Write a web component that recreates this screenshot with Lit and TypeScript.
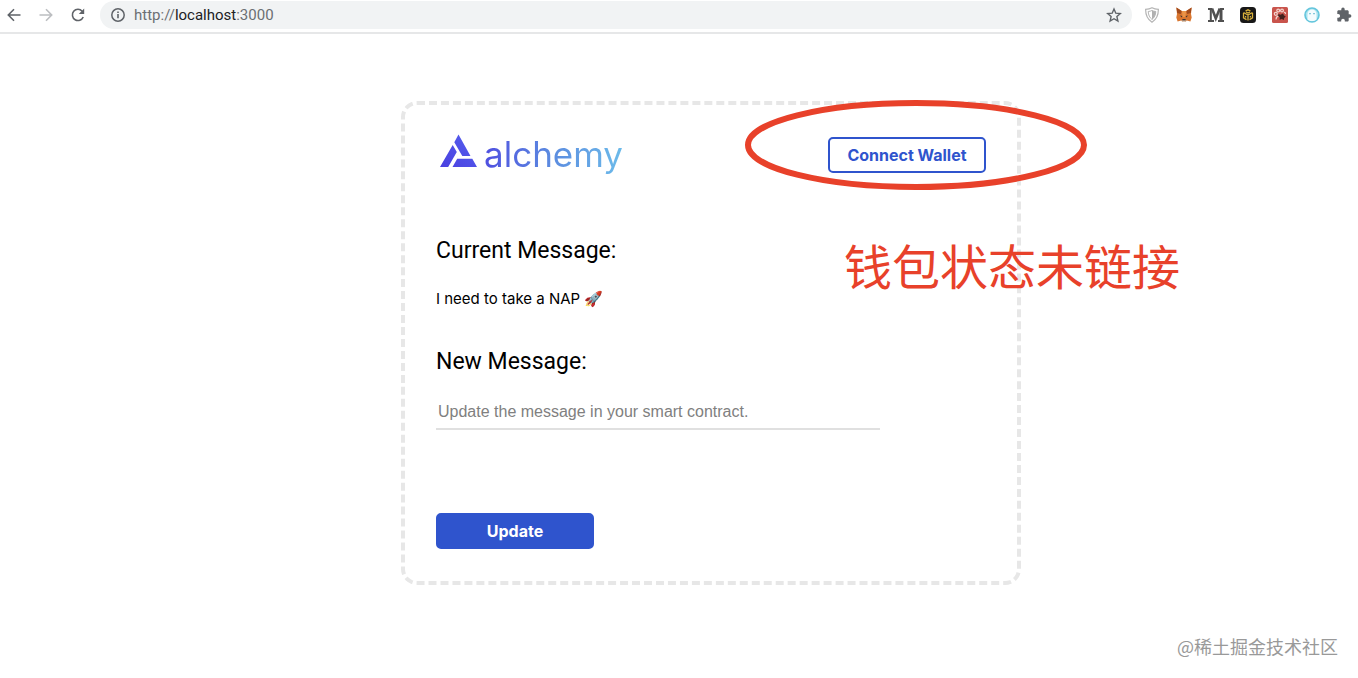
import { LitElement, html, css, svg } from "lit";
import { customElement, state } from "lit/decorators.js";

@customElement("browser-bar")
export class BrowserBar extends LitElement {
  static styles = css`
    :host {
      display: block;
      font-family: Roboto, "Liberation Sans", sans-serif;
    }
    nav {
      display: flex;
      align-items: center;
      height: 34px;
      padding: 0 6px 2px;
      box-sizing: border-box;
      border-bottom: 2px solid #e6e7e8;
    }
    button {
      display: flex;
      padding: 0;
      border: 0;
      background: none;
      color: #5f6368;
    }
    .history {
      display: flex;
      gap: 16px;
      margin-right: 14px;
    }
    .dim {
      color: #bcbec1;
    }
    .address {
      flex: 1;
      display: flex;
      align-items: center;
      gap: 8px;
      height: 28px;
      padding: 0 10px;
      border-radius: 14px;
      background: #f1f3f4;
      color: #5f6368;
    }
    .url {
      flex: 1;
      font-size: 15px;
      line-height: 20px;
      color: #6b6f73;
      text-decoration: none;
    }
    .url b {
      font-weight: 400;
      color: #202124;
    }
    .extensions {
      display: flex;
      gap: 16px;
      margin-left: 12px;
    }
    svg {
      display: block;
    }
  `;

  private icon(body: unknown, size = 16) {
    return html`<svg width=${size} height=${size} viewBox="0 0 16 16" fill="none" stroke="currentColor" stroke-width="1.6">${body}</svg>`;
  }

  render() {
    return html`
      <nav>
        <div class="history">
          <button aria-label="Back">${this.icon(svg`<path d="M14.500 8H2.500M8 2.300L2.300 8L8 13.700"/>`)}</button>
          <button class="dim" aria-label="Forward">${this.icon(svg`<path d="M1.500 8h12M8 2.300L13.700 8L8 13.700"/>`)}</button>
          <button aria-label="Reload">${this.icon(svg`<path d="M13.200 10A5.600 5.600 0 1 1 12.200 4.200"/><path d="M14.200 1.500V7H8.800z" fill="currentColor" stroke="none"/>`)}</button>
        </div>
        <div class="address">
          ${this.icon(svg`<circle cx="8" cy="8" r="6.200" stroke-width="1.500"/><path d="M8 7v4.300M8 4.500v1.500"/>`)}
          <a class="url" href="http://localhost:3000">http://<b>localhost</b>:3000</a>
          <button aria-label="Bookmark">${this.icon(svg`<path stroke-width="1.400" d="M8 2l1.800 4.200 4.500.4-3.400 3 1 4.400L8 11.700 4.100 14l1-4.400-3.400-3 4.500-.4z"/>`)}</button>
        </div>
        <div class="extensions">
          <button aria-label="Shield">${this.icon(svg`<path stroke="#b5b5b5" stroke-width="1.200" d="M8 .8c2 1.100 4 1.500 6.400 1.500C14.400 8 12.500 12.500 8 15.200 3.500 12.500 1.600 8 1.600 2.300 4 2.300 6 1.900 8 .8z"/><path stroke="#b5b5b5" stroke-width="1" d="M8 3.500c1.200.6 2.400.9 3.800 1C11.600 8 10.400 10.600 8 12.500 5.600 10.600 4.400 8 4.200 4.500 5.600 4.400 6.800 4.100 8 3.500z"/><path fill="#b0b0b0" stroke="none" d="M8 3.500v9c2.400-1.900 3.600-4.500 3.800-8C10.400 4.400 9.200 4.100 8 3.500z"/>`)}</button>
          <button aria-label="Fox wallet">${this.icon(svg`<g stroke="none"><path fill="#d9762f" d="M.4.600L5.800 4h4.400L15.600.6 15 7l.7 3.500-1.300 4-3.600-1L9.300 15H6.700l-1.500-1.500-3.600 1-1.300-4L1 7z"/><path fill="#a04a1c" d="M.4.600L5.800 4l-1 3L1.200 6zM15.600.6L10.200 4l1 3 3.600-1z"/><path fill="#ea9448" d="M5.800 4h4.400l-1 6H6.800z"/><path fill="#3a3433" d="M3.800 8.500l2.400.6-.3 1.300zM12.200 8.500l-2.400.6.3 1.300zM6.500 12h3l.3 1.700H6.200z"/><path fill="#d9c6b5" d="M5.200 13.500L6.700 15h2.600l1.500-1.500z"/></g>`)}</button>
          <button aria-label="Reader M">${this.icon(svg`<path fill="none" stroke="#505050" stroke-width="1.800" d="M0 2h4M12 2h4M0 14h6M10 14h6"/><path stroke="#505050" stroke-width="3" d="M13 2v12"/><path stroke="#505050" stroke-width="2" d="M2.800 2v12"/><path stroke="#505050" stroke-width="2.600" d="M4 1.500L7.800 11.500L11.800 1.500"/>`)}</button>
          <button aria-label="Binance wallet">${this.icon(svg`<rect width="16" height="16" rx="3.500" fill="#181818" stroke="none"/><path stroke="#d9b13b" stroke-width="1.300" d="M5.500 4L8 2.800 10.500 4M3.500 6v4.800L6.500 12.600M12.500 6v4.800L9.500 12.600M3.500 5.500L8 8l4.500-2.500M8 8v5.500M6 5l2 1 2-1M5.600 9v1.500M10.400 9v1.500"/>`)}</button>
          <button aria-label="Paw helper">${this.icon(svg`<rect width="16" height="16" rx="1.500" fill="#c9544c" stroke="none"/><g stroke="#f2d5ce" stroke-width="1.200"><circle cx="3.800" cy="6.800" r="1.500"/><circle cx="6.200" cy="3.600" r="1.400"/><circle cx="10" cy="3.600" r="1.400"/><path d="M12 5.500c1-.5 1.800.5 1.300 1.500M4 12.500c0-2 1.500-3.500 3-3.700"/></g><path fill="#43201d" stroke="none" d="M6.500 7l2 .8 2.500-1.300 1 2 1.800 1-1.600 1.500-.4 2-2-1-2.300.8.300-2.300L6 9z"/>`)}</button>
          <button aria-label="Ghost">${this.icon(svg`<circle cx="8" cy="8" r="7" fill="#a9e2ee" stroke="#63c5dc" stroke-width="1.600"/><path fill="#f4fcfe" stroke="none" d="M3.500 12.500V7a4.500 4.500 0 0 1 9 0v5.500c-2.500 2-6.500 2-9 0z"/><path stroke="#3fa9c4" stroke-width="1.200" d="M6 6v1.300M10 6v1.300"/>`)}</button>
          <button aria-label="Extensions">${this.icon(svg`<path fill="#5f6368" stroke="none" d="M13.700 7.300h-1V4.600c0-.7-.6-1.300-1.300-1.300H8.700v-1a1.700 1.700 0 0 0-3.400 0v1H2.600c-.7 0-1.300.6-1.300 1.300v2.500h1a1.800 1.800 0 0 1 0 3.600h-1v2.600c0 .7.600 1.300 1.300 1.300h2.600v-1a1.800 1.800 0 0 1 3.600 0v1h2.600c.7 0 1.300-.6 1.300-1.300v-2.600h1a1.700 1.700 0 0 0 0-3.400z"/>`)}</button>
        </div>
      </nav>
    `;
  }
}

@customElement("app-root")
export class AppRoot extends LitElement {
  static styles = css`
    :host {
      display: block;
      position: relative;
      min-height: 100vh;
      background: #fff;
      color: #000;
      font-family: Inter, "Noto Sans CJK SC", sans-serif;
    }
    main {
      padding: 67px 0 92px 64px;
    }
    .card {
      position: relative;
      max-width: 620px;
      box-sizing: border-box;
      margin: 0 auto;
      padding: 28px 31px 32px;
      border: 4px dashed #e7e7e7;
      border-radius: 16px;
    }
    header {
      display: flex;
      justify-content: space-between;
      align-items: center;
      height: 44px;
    }
    .logo {
      display: flex;
      gap: 6px;
      align-items: flex-start;
      height: 42px;
      padding-left: 4px;
    }
    .word {
      font-size: 35px;
      line-height: 40px;
      font-weight: 400;
      background: linear-gradient(90deg, #4f4fe0, #5c8de0 50%, #6cbbea);
      background-clip: text;
      -webkit-background-clip: text;
      color: transparent;
    }
    h2 {
      margin: 0;
      font: 400 23px/28px Roboto, sans-serif;
    }
    .current {
      margin-top: 60px;
    }
    p {
      margin: 24px 0 39px;
      font-size: 15px;
      line-height: 20px;
    }
    input {
      display: block;
      width: 100%;
      max-width: 444px;
      box-sizing: border-box;
      margin: 21px 0 83px;
      padding: 5px 2px 6px;
      border: 0;
      border-bottom: 2px solid #e0e0e0;
      background: none;
      font: 16px/20px "Liberation Sans", sans-serif;
    }
    input::placeholder {
      color: #808080;
      opacity: 1;
    }
    .btn {
      width: 158px;
      height: 36px;
      padding: 0;
      border: 2px solid #2f54cd;
      border-radius: 5px;
      font: 700 16px/20px Inter, sans-serif;
      color: #2f54cd;
      background: #fff;
    }
    .primary {
      display: block;
      background: #2f54cd;
      color: #fff;
    }
    .ring {
      position: absolute;
      left: 340px;
      top: -5px;
      overflow: visible;
      pointer-events: none;
    }
    .note {
      position: absolute;
      left: 439px;
      top: 127px;
      font: 48px/64px "Noto Sans CJK SC", sans-serif;
      color: #e8412a;
      white-space: nowrap;
    }
    .watermark {
      position: absolute;
      right: 20px;
      bottom: 20px;
      font: 18px/24px "Noto Sans CJK SC", sans-serif;
      color: #999;
    }
  `;

  @state() private message = "I need to take a NAP 🚀";

  render() {
    return html`
      <browser-bar></browser-bar>
      <main>
        <section class="card">
          <header>
            <div class="logo">
              <svg width="38" height="34" viewBox="0 0 38 34">
                <defs>
                  <linearGradient id="mark" x1="0" y1="1" x2="1" y2="0">
                    <stop offset="0" stop-color="#4a40e0" />
                    <stop offset="1" stop-color="#5560ee" />
                  </linearGradient>
                </defs>
                <path fill="url(#mark)" d="M18.500 0.500L14.300 8.300L22.300 22H30.500z M12.700 10.900L0 33H8.200L16.800 18z M17.200 24.700L12.500 33H37L32.300 24.700z" />
              </svg>
              <span class="word">alchemy</span>
            </div>
            <button class="btn">Connect Wallet</button>
          </header>
          <h2 class="current">Current Message:</h2>
          <p>${this.message}</p>
          <h2><label for="message">New Message:</label></h2>
          <input id="message" type="text" placeholder="Update the message in your smart contract." />
          <button class="btn primary">Update</button>
          <svg class="ring" width="342" height="90" viewBox="0 0 342 90">
            <ellipse cx="171" cy="45" rx="168" ry="42" fill="none" stroke="#e8412a" stroke-width="6" />
          </svg>
          <span class="note">钱包状态未链接</span>
        </section>
      </main>
      <span class="watermark">@稀土掘金技术社区</span>
    `;
  }
}
